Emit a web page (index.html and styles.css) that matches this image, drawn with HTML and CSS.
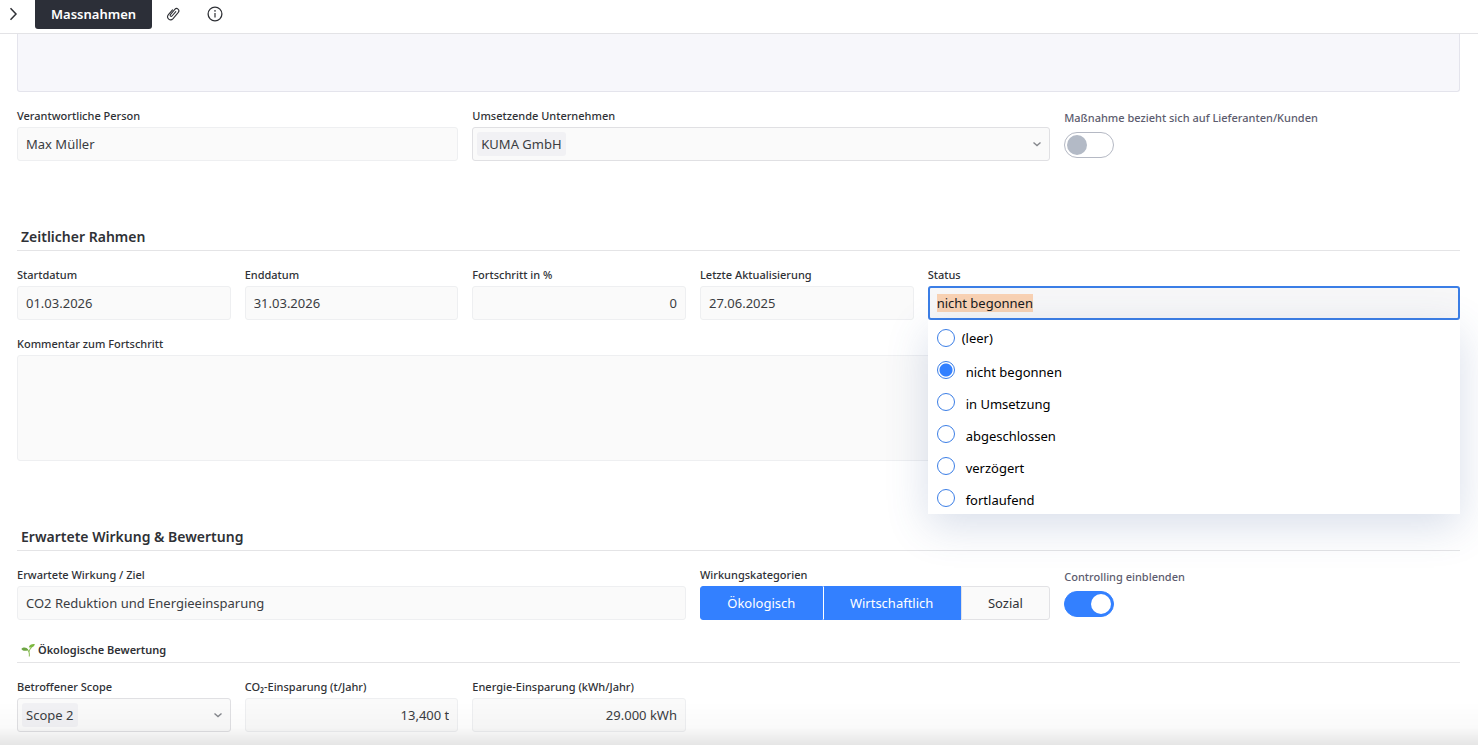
FILE: index.html
```html
<!DOCTYPE html>
<html lang="de">
<head>
<meta charset="utf-8">
<title>Massnahmen</title>
<link rel="stylesheet" href="styles.css">
</head>
<body>
<header class="topbar">
  <button class="icon-button icon-button-back" type="button" aria-label="Aufklappen">
    <svg width="10" height="14" viewBox="0 0 10 14"><path d="M1.500 1.200 7 7 1.500 12.800" fill="none" stroke="currentColor" stroke-width="1.5"/></svg>
  </button>
  <button class="tab" type="button">Massnahmen</button>
  <button class="icon-button" type="button" aria-label="Anhänge">
    <svg width="16" height="16" viewBox="0 0 16 16"><path d="M10.800 5.600 7 10c-.9 1-2.500-.2-1.600-1.400l4.400-5.200c2.100-2.300 5.400.4 3.500 2.900l-5.200 6.300c-2.900 3.200-7.300-.5-4.700-3.900l4.100-4.900" fill="none" stroke="currentColor" stroke-width="1.1" stroke-linecap="round"/></svg>
  </button>
  <button class="icon-button" type="button" aria-label="Information">
    <svg width="16" height="16" viewBox="0 0 16 16"><circle cx="8" cy="8" r="6.900" fill="none" stroke="currentColor" stroke-width="1.3"/><circle cx="8" cy="4.900" r=".8" fill="currentColor"/><path d="M8 6.900v4.600" stroke="currentColor" stroke-width="1.2"/></svg>
  </button>
</header>

<main class="form">
  <textarea class="description" aria-label="Beschreibung" readonly></textarea>

  <div class="row">
    <div class="field span-10">
      <label for="person">Verantwortliche Person</label>
      <input class="control" id="person" type="text" value="Max Müller">
    </div>
    <div class="field span-13">
      <label for="company">Umsetzende Unternehmen</label>
      <div class="control picker">
        <select class="chip" id="company"><option>KUMA GmbH</option></select>
        <svg class="caret" width="10" height="6" viewBox="0 0 10 6"><path d="M1.500 1.500 5 4.500 8.500 1.500" fill="none" stroke="currentColor" stroke-width="1.4"/></svg>
      </div>
    </div>
    <div class="field toggle-field span-9">
      <label for="supplier">Maßnahme bezieht sich auf Lieferanten/Kunden</label>
      <input class="toggle" id="supplier" type="checkbox" role="switch">
    </div>
  </div>

  <h2 class="section-title">Zeitlicher Rahmen</h2>
  <div class="row">
    <div class="field span-5">
      <label for="start">Startdatum</label>
      <input class="control" id="start" type="text" value="01.03.2026">
    </div>
    <div class="field span-5">
      <label for="end">Enddatum</label>
      <input class="control" id="end" type="text" value="31.03.2026">
    </div>
    <div class="field span-5">
      <label for="progress">Fortschritt in %</label>
      <input class="control number" id="progress" type="text" value="0">
    </div>
    <div class="field span-5">
      <label for="updated">Letzte Aktualisierung</label>
      <input class="control" id="updated" type="text" value="27.06.2025">
    </div>
    <div class="field status span-12">
      <label for="status">Status</label>
      <input class="control" id="status" type="text" value="nicht begonnen" autocomplete="off" spellcheck="false">
      <div class="menu">
        <label class="option option-empty"><input type="radio" name="status"><span>(leer)</span></label>
        <label class="option"><input type="radio" name="status" checked><span>nicht begonnen</span></label>
        <label class="option"><input type="radio" name="status"><span>in Umsetzung</span></label>
        <label class="option"><input type="radio" name="status"><span>abgeschlossen</span></label>
        <label class="option"><input type="radio" name="status"><span>verzögert</span></label>
        <label class="option"><input type="radio" name="status"><span>fortlaufend</span></label>
      </div>
    </div>
    <div class="field span-32">
      <label for="comment">Kommentar zum Fortschritt</label>
      <textarea class="control comment" id="comment"></textarea>
    </div>
  </div>

  <h2 class="section-title">Erwartete Wirkung &amp; Bewertung</h2>
  <div class="row">
    <div class="field span-15">
      <label for="goal">Erwartete Wirkung / Ziel</label>
      <input class="control" id="goal" type="text" value="CO2 Reduktion und Energieeinsparung">
    </div>
    <div class="field span-8">
      <span class="caption" id="categories">Wirkungskategorien</span>
      <div class="segments" role="group" aria-labelledby="categories">
        <button class="segment" type="button" aria-pressed="true">Ökologisch</button>
        <button class="segment" type="button" aria-pressed="true">Wirtschaftlich</button>
        <button class="segment" type="button" aria-pressed="false">Sozial</button>
      </div>
    </div>
    <div class="field toggle-field span-9">
      <label for="controlling">Controlling einblenden</label>
      <input class="toggle" id="controlling" type="checkbox" role="switch" checked>
    </div>
  </div>

  <h3 class="subsection-title">
    <svg width="14" height="14" viewBox="0 0 14 14"><path d="M8.300 13.500C8.700 10.500 8.200 8 6 6.300M8.300 8.500c0-1.700.9-3 2.300-4.400" fill="none" stroke="#8fbf5c" stroke-width="1.1"/><path d="M.3 6c2-2 5.100-1.900 6.900.7C4.800 8.500 2 8.200.3 6Z" fill="#6da544"/><path d="M7.800 4.300C8.500 1.700 10.700.7 13.800 1c-.4 2.700-2.700 4.300-6 3.300Z" fill="#7cb83f"/></svg>
    Ökologische Bewertung
  </h3>
  <div class="row">
    <div class="field span-5">
      <label for="scope">Betroffener Scope</label>
      <div class="control picker">
        <select class="chip" id="scope"><option>Scope 2</option></select>
        <svg class="caret" width="10" height="6" viewBox="0 0 10 6"><path d="M1.500 1.500 5 4.500 8.500 1.500" fill="none" stroke="currentColor" stroke-width="1.4"/></svg>
      </div>
    </div>
    <div class="field span-5">
      <label for="co2">CO₂-Einsparung (t/Jahr)</label>
      <input class="control number" id="co2" type="text" value="13,400 t">
    </div>
    <div class="field span-5">
      <label for="energy">Energie-Einsparung (kWh/Jahr)</label>
      <input class="control number" id="energy" type="text" value="29.000 kWh">
    </div>
  </div>
</main>
<div class="bottom-fade"></div>
<script src="script.js"></script>
</body>
</html>
```
FILE: styles.css
```css
* {
  box-sizing: border-box;
}

body {
  margin: 0;
  height: 100vh;
  overflow: hidden;
  background: #fff;
  color: #2f3136;
  font-family: "Noto Sans", sans-serif;
  font-size: 13px;
  line-height: 18px;
}

button,
input,
select,
textarea {
  margin: 0;
  font: inherit;
  color: inherit;
}

.topbar {
  display: flex;
  align-items: flex-start;
  height: 34px;
  border-bottom: 1px solid #e3e3e6;
}

.icon-button {
  display: flex;
  align-items: center;
  justify-content: center;
  width: 42px;
  height: 27px;
  padding: 0;
  border: 0;
  background: none;
  color: #2f3136;
}

.icon-button-back {
  width: 27px;
  margin-right: 8px;
}

.tab {
  height: 29px;
  padding: 0 16px 2px;
  border: 0;
  border-radius: 0 0 3px 3px;
  background: #2c2f38;
  color: #fff;
  font-weight: 600;
}

.form {
  padding: 0 18px 0 17px;
}

.description {
  display: block;
  width: 100%;
  height: 58px;
  margin-bottom: 16px;
  border: 1px solid #e4e4ec;
  border-top: 0;
  border-radius: 0 0 3px 3px;
  background: #f7f7fb;
  resize: none;
}

.row {
  display: grid;
  grid-template-columns: repeat(32, minmax(0, 1fr));
  gap: 16px 14px;
}

.span-5 { grid-column: span 5; }
.span-8 { grid-column: span 8; }
.span-9 { grid-column: span 9; }
.span-10 { grid-column: span 10; }
.span-12 { grid-column: span 12; }
.span-13 { grid-column: span 13; }
.span-15 { grid-column: span 15; }
.span-32 { grid-column: span 32; }

.field {
  display: flex;
  flex-direction: column;
  gap: 3px;
  font-size: 11px;
  font-weight: 500;
  line-height: 16px;
}

.control {
  width: 100%;
  height: 34px;
  padding: 0 8px;
  border: 1px solid #eeeff1;
  border-radius: 3px;
  background: #fafafa;
  color: #3b3d42;
  font-size: 13px;
  font-weight: 400;
  line-height: 18px;
}

.number {
  text-align: right;
}

.comment {
  height: 106px;
  resize: none;
}

.picker {
  display: flex;
  align-items: center;
  justify-content: space-between;
  padding: 0 7px 0 4px;
  border-color: #e0e0e3;
}

.chip {
  height: 24px;
  padding: 0 4px;
  border: 0;
  border-radius: 3px;
  appearance: none;
  background: #f1f1f4;
}

.caret {
  color: #85878d;
}

.toggle-field {
  gap: 6px;
  padding-top: 2px;
  color: #5c5c6e;
}

.toggle {
  display: flex;
  align-items: center;
  width: 50px;
  height: 26px;
  padding: 0 2px;
  border: 1px solid #b5b9c4;
  border-radius: 13px;
  appearance: none;
  background: #fff;
}

.toggle::before {
  content: "";
  width: 20px;
  height: 20px;
  border-radius: 50%;
  background: #b3bac6;
}

.toggle:checked {
  justify-content: flex-end;
  border-color: #3380ff;
  background: #3380ff;
}

.toggle:checked::before {
  background: #fff;
}

.section-title,
.subsection-title {
  border-bottom: 1px solid #e4e4e6;
  font-weight: 600;
}

.section-title {
  margin: 66px 0 16px;
  padding: 0 4px 3px;
  font-size: 14px;
  line-height: 20px;
}

.subsection-title {
  display: flex;
  align-items: center;
  gap: 3px;
  margin: 21px 0 16px;
  padding: 0 4px 3px;
  font-size: 11px;
  line-height: 18px;
}

.status {
  position: relative;
}

.status .control {
  border: 2px solid #3b7ee6;
  padding: 0 7px;
  background: #f7f7f8;
  color: #17181a;
  outline: 0;
}

.status .control::selection {
  background: #f9d2b3;
  color: #17181a;
}

.menu {
  position: absolute;
  top: 100%;
  left: 0;
  right: 0;
  z-index: 2;
  padding: 2px 9px 0;
  background: #fff;
  box-shadow: 0 12px 40px rgba(60, 90, 150, 0.2);
  color: #000;
  font-size: 13px;
  font-weight: 400;
  line-height: 18px;
}

.option {
  display: flex;
  align-items: center;
  gap: 11px;
  height: 32px;
}

.option span {
  padding-top: 4px;
}

.option-empty {
  gap: 7px;
}

.option-empty span {
  padding-top: 0;
}

.option input {
  width: 18px;
  height: 18px;
  border: 1px solid #3b7ee6;
  border-radius: 50%;
  appearance: none;
  background: #fff;
}

.option input:checked {
  background: radial-gradient(circle, #3380ff 6px, #fff 7px);
}

.segments {
  display: flex;
}

.segment {
  flex: 1 1 auto;
  height: 34px;
  padding: 0;
  border: 1px solid #3380ff;
  background: #3380ff;
  color: #fff;
  font-size: 13px;
  font-weight: 400;
  line-height: 18px;
}

.segment + .segment {
  border-left-color: #fff;
}

.segment:first-child {
  border-radius: 3px 0 0 3px;
}

.segment:last-child {
  border-radius: 0 3px 3px 0;
}

.segment[aria-pressed="false"] {
  border-color: #e2e2e5;
  background: #fafafa;
  color: #2f3136;
}

.bottom-fade {
  position: fixed;
  right: 0;
  bottom: 0;
  left: 0;
  height: 44px;
  background: linear-gradient(rgba(0, 0, 0, 0), rgba(0, 0, 0, 0.02) 60%, rgba(0, 0, 0, 0.1));
  pointer-events: none;
}
```
FILE: script.js
```js
const statusInput = document.getElementById("status");
statusInput.focus();
statusInput.select();
```
